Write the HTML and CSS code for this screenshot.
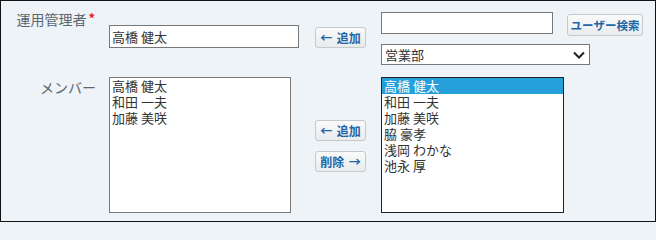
FILE: index.html
```html
<!DOCTYPE html>
<html lang="ja">
<head>
<meta charset="utf-8">
<link rel="stylesheet" href="styles.css">
</head>
<body>
<div class="panel">
  <div class="label label-top"><span class="ltext">運用管理者</span><span class="req">*</span></div>
  <div class="main-cell">
    <div class="textbox wide">高橋 健太</div>
  </div>
  <div class="btn-cell">
    <button class="btn">← 追加</button>
  </div>
  <div class="right-cell">
    <div class="search-row">
      <div class="textbox search"></div>
      <button class="btn btn-search">ユーザー検索</button>
    </div>
    <div class="dropdown">
      <span>営業部</span>
      <svg class="chev" width="12" height="8" viewBox="0 0 12 8"><path d="M1 1.5 L6 6.5 L11 1.5" fill="none" stroke="#222" stroke-width="2"/></svg>
    </div>
  </div>

  <div class="label label-members">メンバー</div>
  <div class="main-cell list-cell">
    <div class="listbox">
      <div class="opt">高橋 健太</div>
      <div class="opt">和田 一夫</div>
      <div class="opt">加藤 美咲</div>
    </div>
  </div>
  <div class="btn-cell move-btns">
    <button class="btn">← 追加</button>
    <button class="btn">削除 →</button>
  </div>
  <div class="right-cell list-cell">
    <div class="listbox dark">
      <div class="opt sel">高橋 健太</div>
      <div class="opt">和田 一夫</div>
      <div class="opt">加藤 美咲</div>
      <div class="opt">脇 豪孝</div>
      <div class="opt">浅岡 わかな</div>
      <div class="opt">池永 厚</div>
    </div>
  </div>
</div>
</body>
</html>
```

FILE: styles.css
```css
* { box-sizing: border-box; }
html, body { margin: 0; padding: 0; }
body {
  font-family: "Noto Sans CJK JP", "Noto Sans", sans-serif;
  background: #eef3f7;
}
.panel {
  width: 656px;
  height: 222px;
  border: 1px solid #111;
  background: #eef3f7;
  display: grid;
  grid-template-columns: 108px 206px 66px 1fr;
  grid-template-rows: 50px 136px;
  row-gap: 15px;
  padding-top: 11px;
}
.label {
  font-size: 14px;
  line-height: 18px;
  color: #5b6670;
  text-align: right;
  padding-right: 13px;
}
.label-top {
  margin-top: -2px;
  padding-right: 14px;
  display: flex;
  justify-content: flex-end;
  align-items: flex-start;
}
.label-members { margin-top: 1px; }
.req {
  display: block;
  color: #f0142a;
  font-size: 13px;
  font-weight: bold;
  line-height: 10px;
  margin-left: 2px;
  margin-top: 3px;
}
.main-cell { display: flex; align-items: flex-end; padding-bottom: 14px; }
.btn-cell { display: flex; align-items: flex-end; padding-bottom: 14px; }
.list-cell, .move-btns { padding-bottom: 0; align-items: stretch; }
.textbox {
  background: #fff;
  border: 1px solid #777;
  font-size: 13px;
  color: #333;
  padding: 0 2px;
  line-height: 21px;
}
.wide { width: 190px; height: 23px; }
.right-cell { display: flex; flex-direction: column; gap: 8px; }
.search-row { display: flex; align-items: flex-start; }
.search { width: 172px; height: 22px; }
.btn {
  font-family: "Noto Sans CJK JP", "Noto Sans", sans-serif;
  font-size: 12px;
  font-weight: bold;
  color: #1f65a6;
  background: linear-gradient(#fafafa, #e9ebed);
  border: 1px solid #c5c9cc;
  border-radius: 3px;
  width: 51px;
  height: 21px;
  padding: 0;
  line-height: 19px;
  white-space: nowrap;
  word-spacing: 2px;
}
.btn-search {
  width: 76px;
  height: 22px;
  margin-left: 14px;
  margin-top: 2px;
  font-size: 11.5px;
}
.dropdown {
  width: 209px;
  height: 21px;
  background: #fff;
  border: 1px solid #777;
  display: flex;
  align-items: center;
  justify-content: space-between;
  font-size: 13px;
  color: #333;
  padding: 0 3px 0 3px;
}
.chev { margin-right: 1px; }
.listbox {
  background: #fff;
  border: 1px solid #777;
  width: 182px;
  height: 136px;
  font-size: 13px;
  color: #333;
}
.listbox.dark { border-color: #222; width: 183px; }
.opt { line-height: 16px; height: 16px; padding-left: 2px; white-space: nowrap; }
.opt.sel { background: #259fd9; color: #fff; }
.move-btns {
  flex-direction: column;
  justify-content: flex-start;
  padding-top: 43px;
  gap: 10px;
}
```
